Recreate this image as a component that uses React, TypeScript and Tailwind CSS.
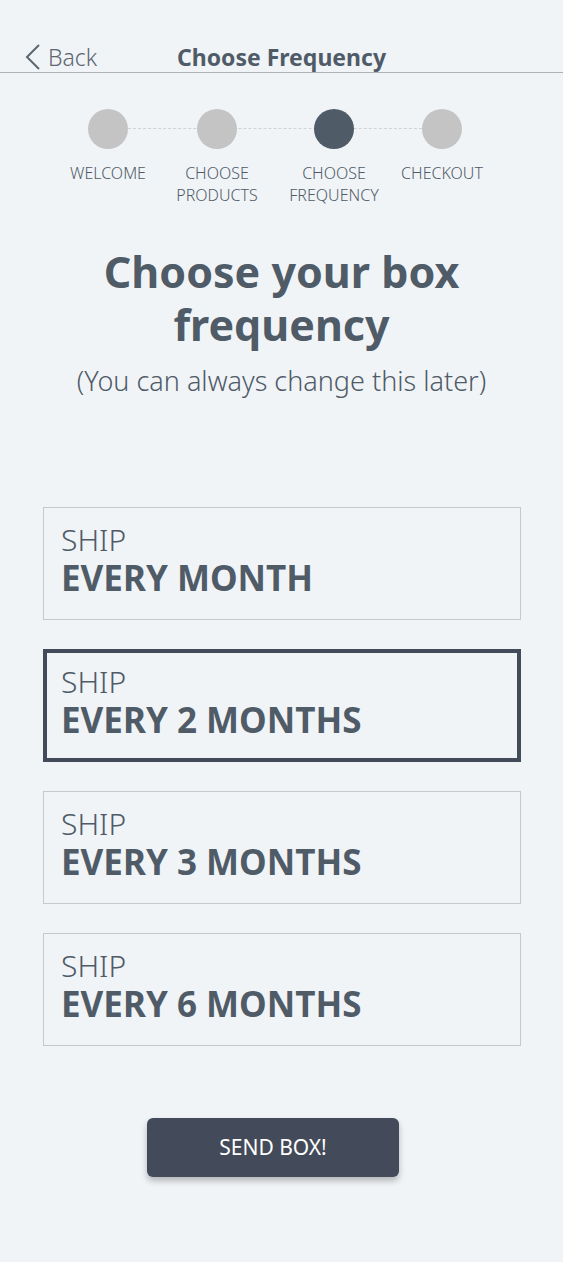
import { useState } from "react";

const steps = [
  { label: ["WELCOME"], active: false, width: "w-[110px]" },
  { label: ["CHOOSE", "PRODUCTS"], active: false, width: "w-[108px]" },
  { label: ["CHOOSE", "FREQUENCY"], active: true, width: "w-[126px]" },
  { label: ["CHECKOUT"], active: false, width: "w-[90px]" },
];

const options = ["EVERY MONTH", "EVERY 2 MONTHS", "EVERY 3 MONTHS", "EVERY 6 MONTHS"];

function App() {
  const [selected, setSelected] = useState(1);

  return (
    <div
      className="min-h-[1262px] w-full bg-[#f1f4f7] text-[#4f5b67]"
      style={{ fontFamily: '"Noto Sans", "Open Sans", sans-serif' }}
    >
      {/* header */}
      <div className="grid grid-cols-[1fr_auto_1fr] items-end h-[73px] border-b border-[#adb2b7]">
        <button className="flex items-center gap-[7px] pl-[23px] text-[23px] font-light text-[#5c6772] leading-[30px]">
          <svg width="18" height="26" viewBox="0 0 18 26" fill="none">
            <path d="M16 1 L4 13 L16 25" stroke="#5c6772" strokeWidth="2" />
          </svg>
          Back
        </button>
        <div className="text-[23px] font-bold leading-[30px] text-[#4f5b67]">Choose Frequency</div>
        <div />
      </div>

      {/* steps */}
      <div className="relative mt-[36px] pl-[53px] flex">
        <div className="absolute left-[108px] w-[334px] top-[19px] border-t border-dashed border-[#cfd3d7]" />
        {steps.map((s, i) => (
          <div key={i} className={`relative ${s.width} flex flex-col items-center`}>
            <div className={`w-[40px] h-[40px] rounded-full ${s.active ? "bg-[#4f5b67]" : "bg-[#c4c4c4]"}`} />
            <div className="mt-[13px] text-center text-[16px] font-light leading-[22px] text-[#4f5b67] whitespace-nowrap">
              {s.label.map((l) => (
                <div key={l}>{l}</div>
              ))}
            </div>
          </div>
        ))}
      </div>

      {/* title */}
      <h1 className="mt-[39px] text-center text-[43px] font-bold leading-[53px] text-[#4f5b67]">
        Choose your box
        <br />
        frequency
      </h1>
      <p className="mt-[12px] text-center text-[27px] font-light leading-[36px] text-[#4f5b67]">
        (You can always change this later)
      </p>

      {/* options */}
      <div className="mt-[108px] flex flex-col gap-[29px] px-[43px]">
        {options.map((o, i) => (
          <button
            key={o}
            onClick={() => setSelected(i)}
            className={`h-[113px] w-[478px] text-left flex flex-col ${
              selected === i ? "border-4 border-[#434b5a] pl-[14px] pt-[10px]" : "border border-[#c6c8ca] pl-[17px] pt-[13px]"
            }`}
          >
            <div className="text-[30px] font-light leading-[38px]">SHIP</div>
            <div className="text-[35px] font-bold leading-[38px]">{o}</div>
          </button>
        ))}
      </div>

      {/* send */}
      <div className="mt-[72px] pl-[147px]">
        <button className="w-[252px] h-[59px] rounded-[6px] bg-[#434b5a] text-white text-[21px] shadow-[0_4px_6px_rgba(0,0,0,0.25)]">
          SEND BOX!
        </button>
      </div>
    </div>
  );
}

export default App;
